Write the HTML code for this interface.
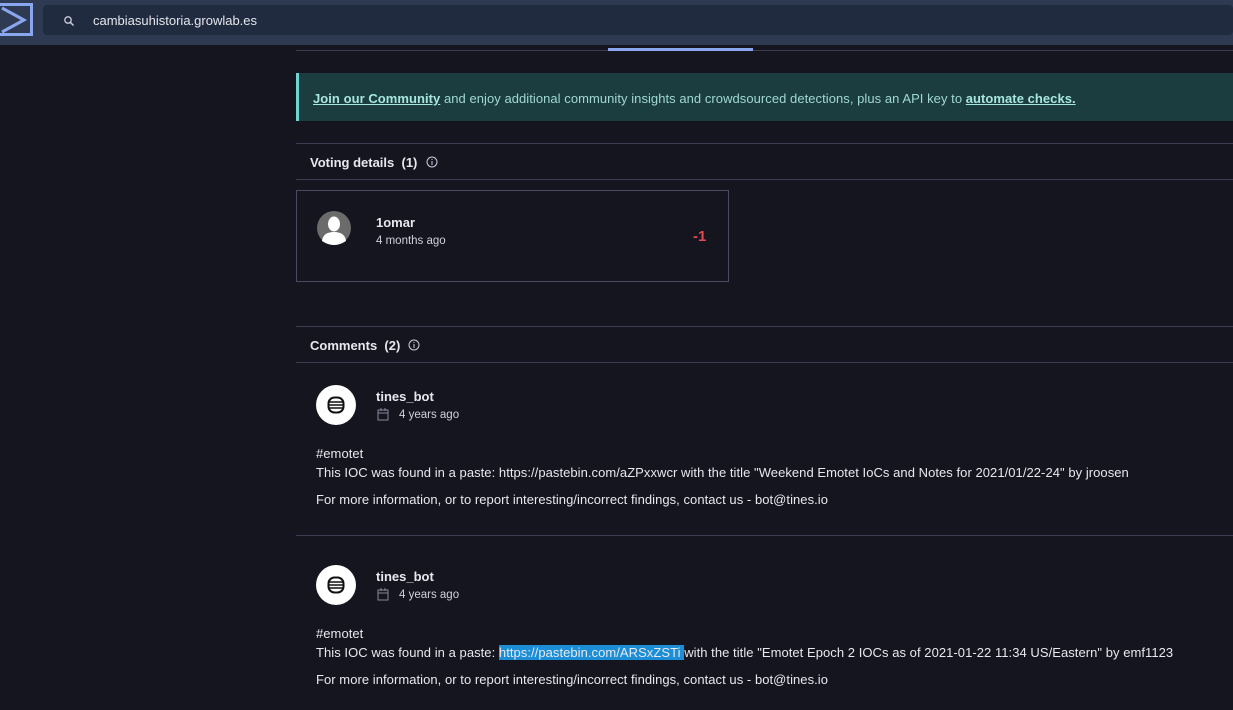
<!DOCTYPE html>
<html><head><style>
*{margin:0;padding:0;box-sizing:border-box}
body{width:1233px;height:710px;overflow:hidden;background:#14151f;font-family:"Liberation Sans",sans-serif;color:#e8e8ee;position:relative;font-size:13px}
.a{position:absolute;white-space:nowrap}
.line{position:absolute;left:296px;right:0;height:1px;background:#3c3d52}
.b{font-weight:bold}
.t{font-size:13px;letter-spacing:0.05px}
</style></head><body>
<div class="a" style="left:0;top:0;width:1233px;height:45px;background:#2e3a52"></div>
<div class="a" style="left:0;top:3px;width:33px;height:33px;border:3px solid #8aa6ee;border-left:none;background:#2e3a52"></div>
<svg class="a" style="left:0;top:6px" width="30" height="28"><path d="M2 2 L24 14 L2 26" stroke="#8aa6ee" stroke-width="3" fill="none"/></svg>
<div class="a" style="left:43px;top:5px;width:1190px;height:30px;background:#212b3f;border-radius:4px"></div>
<svg class="a" style="left:63px;top:15px" width="12" height="12"><circle cx="5" cy="5" r="3.2" stroke="#ccd" stroke-width="1.3" fill="none"/><path d="M7.5 7.5 L10.5 10.5" stroke="#ccd" stroke-width="1.5"/></svg>
<div class="a" style="left:93px;top:13px;font-size:13px;color:#e4e6ee">cambiasuhistoria.growlab.es</div>
<div class="line" style="top:50px"></div>
<div class="a" style="left:608px;top:48px;width:145px;height:3px;background:#8aa6ee"></div>
<div class="a" style="left:296px;top:73px;width:937px;height:48px;background:#1b3d3f;border-left:3px solid #6fd3cf"></div>
<div class="a" style="left:313px;top:91px;color:#9fd8d2;letter-spacing:0.05px"><span class="b" style="text-decoration:underline;color:#a8e6e0">Join our Community</span> and enjoy additional community insights and crowdsourced detections, plus an API key to <span class="b" style="text-decoration:underline;color:#a8e6e0">automate checks.</span></div>
<div class="line" style="top:143px"></div>
<div class="a b" style="left:310px;top:155px">Voting details&nbsp; (1)</div>
<svg class="a" style="left:426px;top:156px" width="12" height="12"><circle cx="6" cy="6" r="5" stroke="#ccd" fill="none"/><path d="M6 5v4M6 3v1" stroke="#ccd"/></svg>
<div class="line" style="top:179px"></div>
<div class="a" style="left:296px;top:190px;width:433px;height:92px;border:1px solid #4a4b63"></div>
<svg class="a" style="left:317px;top:211px" width="34" height="34"><circle cx="17" cy="17" r="17" fill="#6b6b6b"/><ellipse cx="17" cy="13" rx="6" ry="7.5" fill="#fff"/><path d="M5 30 Q6 21 17 21 Q28 21 29 30 Q23 34 17 34 Q11 34 5 30Z" fill="#fff"/></svg>
<div class="a b" style="left:376px;top:215px">1omar</div>
<div class="a" style="left:376px;top:235px;font-size:11.5px;color:#cfd0da">4 months ago</div>
<div class="a b" style="left:693px;top:228px;color:#e5484d;font-size:15px">-1</div>
<div class="line" style="top:326px"></div>
<div class="a b" style="left:310px;top:338px">Comments&nbsp; (2)</div>
<svg class="a" style="left:408px;top:339px" width="12" height="12"><circle cx="6" cy="6" r="5" stroke="#ccd" fill="none"/><path d="M6 5v4M6 3v1" stroke="#ccd"/></svg>
<div class="line" style="top:362px"></div>

<div class="a" style="left:0;top:0">
<svg class="a" style="left:316px;top:385px" width="40" height="40"><circle cx="20" cy="20" r="20" fill="#fff"/><rect x="12.5" y="12.5" width="15" height="15" rx="6" fill="none" stroke="#111" stroke-width="2"/><path d="M12 17h16M12 20h16M12 23h16" stroke="#111" stroke-width="1.6"/></svg>
<div class="a b" style="left:376px;top:389px">tines_bot</div>
<svg class="a" style="left:377px;top:408px" width="12" height="13"><rect x="1" y="2" width="10" height="10" fill="none" stroke="#889"/><path d="M1 5h10M4 0v3M8 0v3" stroke="#889"/></svg>
<div class="a" style="left:399px;top:409px;font-size:11.5px;color:#cfd0da">4 years ago</div>
<div class="a t" style="left:316px;top:446px">#emotet</div>
<div class="a t" style="left:316px;top:465px">This IOC was found in a paste: https://pastebin.com/aZPxxwcr with the title "Weekend Emotet IoCs and Notes for 2021/01/22-24" by jroosen</div>
<div class="a t" style="left:316px;top:492px">For more information, or to report interesting/incorrect findings, contact us - bot@tines.io</div>
</div>
<div class="line" style="top:535px"></div>
<div class="a" style="left:0;top:180px">
<svg class="a" style="left:316px;top:385px" width="40" height="40"><circle cx="20" cy="20" r="20" fill="#fff"/><rect x="12.5" y="12.5" width="15" height="15" rx="6" fill="none" stroke="#111" stroke-width="2"/><path d="M12 17h16M12 20h16M12 23h16" stroke="#111" stroke-width="1.6"/></svg>
<div class="a b" style="left:376px;top:389px">tines_bot</div>
<svg class="a" style="left:377px;top:408px" width="12" height="13"><rect x="1" y="2" width="10" height="10" fill="none" stroke="#889"/><path d="M1 5h10M4 0v3M8 0v3" stroke="#889"/></svg>
<div class="a" style="left:399px;top:409px;font-size:11.5px;color:#cfd0da">4 years ago</div>
<div class="a t" style="left:316px;top:446px">#emotet</div>
<div class="a t" style="left:316px;top:465px">This IOC was found in a paste: <span style="background:#1c8ed6">https://pastebin.com/ARSxZSTi </span>with the title "Emotet Epoch 2 IOCs as of 2021-01-22 11:34 US/Eastern" by emf1123</div>
<div class="a t" style="left:316px;top:492px">For more information, or to report interesting/incorrect findings, contact us - bot@tines.io</div>
</div>
</body></html>
